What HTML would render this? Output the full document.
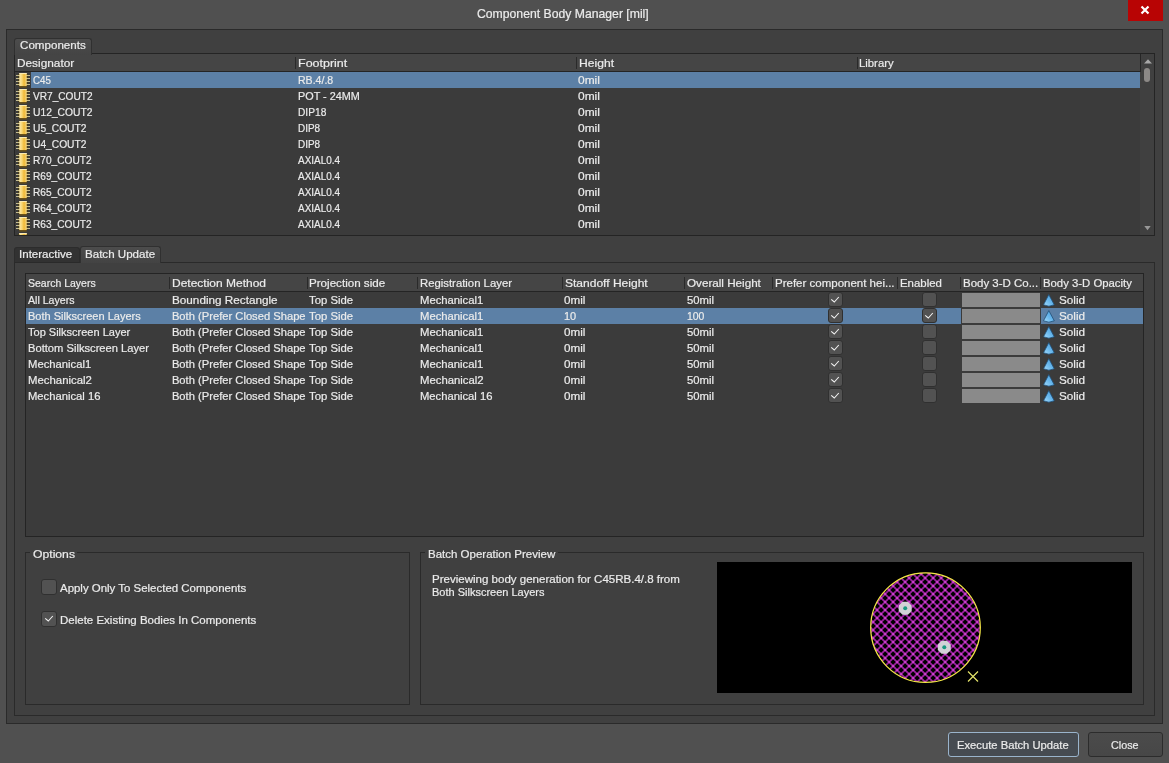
<!DOCTYPE html><html><head><meta charset="utf-8"><title>Component Body Manager</title><style>
*{box-sizing:border-box;margin:0;padding:0}
html,body{width:1169px;height:763px;overflow:hidden;background:#505050}
body{font-family:"Liberation Sans",sans-serif;font-size:11.5px;color:#ebebeb;position:relative}
.a{position:absolute}
.t{position:absolute;white-space:nowrap;line-height:16px;height:16px;transform-origin:0 0;-webkit-text-stroke:0.2px #ebebeb}
.panel{background:#404040;border:1px solid #2a2a2a}
.list{background:#3b3b3b;border:1px solid #242424}
.hdr{background:#454545;border-bottom:1px solid #242424}
.sel{background:#5c80a6}
.sep{position:absolute;width:1px;background:#2a2a2a}
.cb{position:absolute;width:15px;height:15px;background:#525252;border:1px solid #303030;border-radius:3px}
.cbL{position:absolute;width:16px;height:16px;background:#525252;border:1px solid #303030;border-radius:3px}
.sw{position:absolute;width:78px;height:14px;background:#8a8a8a}
.tab{position:absolute;border:1px solid #2a2a2a;border-bottom:none;border-radius:3px 3px 0 0}
.btn{position:absolute;background:linear-gradient(#4b4b4b,#474747);border:1px solid #2c2c2c;border-radius:3px}
</style></head><body><div id="w" style="position:absolute;left:0;top:0;width:1169px;height:763px;will-change:transform">
<svg width="0" height="0" style="position:absolute"><defs><linearGradient id="cg" x1="0" x2="1" y1="1" y2="0"><stop offset="0" stop-color="#a6dcfb"/><stop offset=".5" stop-color="#66b6ec"/><stop offset="1" stop-color="#4a98d6"/></linearGradient></defs></svg>
<div class="t" style="left:476.7px;top:6px;font-size:12.2px;transform:scaleX(1.002);">Component Body Manager [mil]</div>
<div class="a" style="left:1128px;top:0;width:35px;height:20.5px;background:#b80404"></div>
<svg class="a" style="left:1139px;top:4px" width="12" height="12" viewBox="0 0 12 12"><path d="M2.5 2.5 L9.5 9.5 M9.5 2.5 L2.5 9.5" stroke="#fff" stroke-width="2.2" fill="none"/></svg>
<div class="a panel" style="left:6px;top:29px;width:1157px;height:695px"></div>
<div class="a list" style="left:14px;top:53px;width:1141px;height:183px"></div>
<div class="a hdr" style="left:15px;top:54px;width:1125px;height:18px"></div>
<div class="tab" style="left:14px;top:38px;width:78px;height:17px;background:linear-gradient(#4c4c4c,#444444);border-color:#303030"></div>
<div class="t" style="left:19.9px;top:37px;font-size:11.2px;transform:scaleX(1.037);">Components</div>
<div class="t" style="left:17.4px;top:55px;font-size:11.2px;transform:scaleX(1.057);">Designator</div>
<div class="t" style="left:297.7px;top:55px;font-size:11.2px;transform:scaleX(1.116);">Footprint</div>
<div class="t" style="left:578.7px;top:55px;font-size:11.2px;transform:scaleX(1.082);">Height</div>
<div class="t" style="left:859.4px;top:55px;font-size:11.2px;transform:scaleX(1.012);">Library</div>
<div class="sep" style="left:295px;top:57px;height:12px"></div>
<div class="sep" style="left:576px;top:57px;height:12px"></div>
<div class="sep" style="left:857px;top:57px;height:12px"></div>
<div class="a sel" style="left:31px;top:72px;width:1109px;height:16px"></div>
<svg class="a" style="left:16px;top:72px" width="14" height="16" viewBox="0 0 14 16"><defs><linearGradient id="g" x1="0" x2="1" y1="0" y2="0"><stop offset="0" stop-color="#fbe9ac"/><stop offset=".35" stop-color="#f8d877"/><stop offset=".65" stop-color="#f0b935"/><stop offset="1" stop-color="#f6d884"/></linearGradient></defs><path d="M2 2H12V14H2Z" fill="#4a3d14"/><path d="M0 3.5H14M0 6.5H14M0 9.5H14M0 12.5H14" stroke="#c6bc8c" stroke-width="1"/><rect x="3.3" y="1" width="7.4" height="13" fill="url(#g)"/><rect x="3.3" y="1" width="7.4" height="1" fill="#fbeab0"/><rect x="3.3" y="14" width="7.4" height="1.6" fill="#6b5218"/></svg>
<div class="t" style="left:33.4px;top:72px;font-size:11.2px;transform:scaleX(0.872);">C45</div>
<div class="t" style="left:298.2px;top:72px;font-size:11.2px;transform:scaleX(0.943);">RB.4/.8</div>
<div class="t" style="left:578.2px;top:72px;font-size:11.2px;transform:scaleX(1.067);">0mil</div>
<svg class="a" style="left:16px;top:88px" width="14" height="16" viewBox="0 0 14 16"><defs><linearGradient id="g" x1="0" x2="1" y1="0" y2="0"><stop offset="0" stop-color="#fbe9ac"/><stop offset=".35" stop-color="#f8d877"/><stop offset=".65" stop-color="#f0b935"/><stop offset="1" stop-color="#f6d884"/></linearGradient></defs><path d="M2 2H12V14H2Z" fill="#4a3d14"/><path d="M0 3.5H14M0 6.5H14M0 9.5H14M0 12.5H14" stroke="#c6bc8c" stroke-width="1"/><rect x="3.3" y="1" width="7.4" height="13" fill="url(#g)"/><rect x="3.3" y="1" width="7.4" height="1" fill="#fbeab0"/><rect x="3.3" y="14" width="7.4" height="1.6" fill="#6b5218"/></svg>
<div class="t" style="left:33.4px;top:88px;font-size:11.2px;transform:scaleX(0.903);">VR7_COUT2</div>
<div class="t" style="left:298.2px;top:88px;font-size:11.2px;transform:scaleX(0.967);">POT - 24MM</div>
<div class="t" style="left:578.2px;top:88px;font-size:11.2px;transform:scaleX(1.067);">0mil</div>
<svg class="a" style="left:16px;top:104px" width="14" height="16" viewBox="0 0 14 16"><defs><linearGradient id="g" x1="0" x2="1" y1="0" y2="0"><stop offset="0" stop-color="#fbe9ac"/><stop offset=".35" stop-color="#f8d877"/><stop offset=".65" stop-color="#f0b935"/><stop offset="1" stop-color="#f6d884"/></linearGradient></defs><path d="M2 2H12V14H2Z" fill="#4a3d14"/><path d="M0 3.5H14M0 6.5H14M0 9.5H14M0 12.5H14" stroke="#c6bc8c" stroke-width="1"/><rect x="3.3" y="1" width="7.4" height="13" fill="url(#g)"/><rect x="3.3" y="1" width="7.4" height="1" fill="#fbeab0"/><rect x="3.3" y="14" width="7.4" height="1.6" fill="#6b5218"/></svg>
<div class="t" style="left:33.4px;top:104px;font-size:11.2px;transform:scaleX(0.920);">U12_COUT2</div>
<div class="t" style="left:298.2px;top:104px;font-size:11.2px;transform:scaleX(0.910);">DIP18</div>
<div class="t" style="left:578.2px;top:104px;font-size:11.2px;transform:scaleX(1.067);">0mil</div>
<svg class="a" style="left:16px;top:120px" width="14" height="16" viewBox="0 0 14 16"><defs><linearGradient id="g" x1="0" x2="1" y1="0" y2="0"><stop offset="0" stop-color="#fbe9ac"/><stop offset=".35" stop-color="#f8d877"/><stop offset=".65" stop-color="#f0b935"/><stop offset="1" stop-color="#f6d884"/></linearGradient></defs><path d="M2 2H12V14H2Z" fill="#4a3d14"/><path d="M0 3.5H14M0 6.5H14M0 9.5H14M0 12.5H14" stroke="#c6bc8c" stroke-width="1"/><rect x="3.3" y="1" width="7.4" height="13" fill="url(#g)"/><rect x="3.3" y="1" width="7.4" height="1" fill="#fbeab0"/><rect x="3.3" y="14" width="7.4" height="1.6" fill="#6b5218"/></svg>
<div class="t" style="left:33.4px;top:120px;font-size:11.2px;transform:scaleX(0.914);">U5_COUT2</div>
<div class="t" style="left:298.2px;top:120px;font-size:11.2px;transform:scaleX(0.888);">DIP8</div>
<div class="t" style="left:578.2px;top:120px;font-size:11.2px;transform:scaleX(1.067);">0mil</div>
<svg class="a" style="left:16px;top:136px" width="14" height="16" viewBox="0 0 14 16"><defs><linearGradient id="g" x1="0" x2="1" y1="0" y2="0"><stop offset="0" stop-color="#fbe9ac"/><stop offset=".35" stop-color="#f8d877"/><stop offset=".65" stop-color="#f0b935"/><stop offset="1" stop-color="#f6d884"/></linearGradient></defs><path d="M2 2H12V14H2Z" fill="#4a3d14"/><path d="M0 3.5H14M0 6.5H14M0 9.5H14M0 12.5H14" stroke="#c6bc8c" stroke-width="1"/><rect x="3.3" y="1" width="7.4" height="13" fill="url(#g)"/><rect x="3.3" y="1" width="7.4" height="1" fill="#fbeab0"/><rect x="3.3" y="14" width="7.4" height="1.6" fill="#6b5218"/></svg>
<div class="t" style="left:33.4px;top:136px;font-size:11.2px;transform:scaleX(0.914);">U4_COUT2</div>
<div class="t" style="left:298.2px;top:136px;font-size:11.2px;transform:scaleX(0.888);">DIP8</div>
<div class="t" style="left:578.2px;top:136px;font-size:11.2px;transform:scaleX(1.067);">0mil</div>
<svg class="a" style="left:16px;top:152px" width="14" height="16" viewBox="0 0 14 16"><defs><linearGradient id="g" x1="0" x2="1" y1="0" y2="0"><stop offset="0" stop-color="#fbe9ac"/><stop offset=".35" stop-color="#f8d877"/><stop offset=".65" stop-color="#f0b935"/><stop offset="1" stop-color="#f6d884"/></linearGradient></defs><path d="M2 2H12V14H2Z" fill="#4a3d14"/><path d="M0 3.5H14M0 6.5H14M0 9.5H14M0 12.5H14" stroke="#c6bc8c" stroke-width="1"/><rect x="3.3" y="1" width="7.4" height="13" fill="url(#g)"/><rect x="3.3" y="1" width="7.4" height="1" fill="#fbeab0"/><rect x="3.3" y="14" width="7.4" height="1.6" fill="#6b5218"/></svg>
<div class="t" style="left:33.4px;top:152px;font-size:11.2px;transform:scaleX(0.905);">R70_COUT2</div>
<div class="t" style="left:298.2px;top:152px;font-size:11.2px;transform:scaleX(0.890);">AXIAL0.4</div>
<div class="t" style="left:578.2px;top:152px;font-size:11.2px;transform:scaleX(1.067);">0mil</div>
<svg class="a" style="left:16px;top:168px" width="14" height="16" viewBox="0 0 14 16"><defs><linearGradient id="g" x1="0" x2="1" y1="0" y2="0"><stop offset="0" stop-color="#fbe9ac"/><stop offset=".35" stop-color="#f8d877"/><stop offset=".65" stop-color="#f0b935"/><stop offset="1" stop-color="#f6d884"/></linearGradient></defs><path d="M2 2H12V14H2Z" fill="#4a3d14"/><path d="M0 3.5H14M0 6.5H14M0 9.5H14M0 12.5H14" stroke="#c6bc8c" stroke-width="1"/><rect x="3.3" y="1" width="7.4" height="13" fill="url(#g)"/><rect x="3.3" y="1" width="7.4" height="1" fill="#fbeab0"/><rect x="3.3" y="14" width="7.4" height="1.6" fill="#6b5218"/></svg>
<div class="t" style="left:33.4px;top:168px;font-size:11.2px;transform:scaleX(0.905);">R69_COUT2</div>
<div class="t" style="left:298.2px;top:168px;font-size:11.2px;transform:scaleX(0.890);">AXIAL0.4</div>
<div class="t" style="left:578.2px;top:168px;font-size:11.2px;transform:scaleX(1.067);">0mil</div>
<svg class="a" style="left:16px;top:184px" width="14" height="16" viewBox="0 0 14 16"><defs><linearGradient id="g" x1="0" x2="1" y1="0" y2="0"><stop offset="0" stop-color="#fbe9ac"/><stop offset=".35" stop-color="#f8d877"/><stop offset=".65" stop-color="#f0b935"/><stop offset="1" stop-color="#f6d884"/></linearGradient></defs><path d="M2 2H12V14H2Z" fill="#4a3d14"/><path d="M0 3.5H14M0 6.5H14M0 9.5H14M0 12.5H14" stroke="#c6bc8c" stroke-width="1"/><rect x="3.3" y="1" width="7.4" height="13" fill="url(#g)"/><rect x="3.3" y="1" width="7.4" height="1" fill="#fbeab0"/><rect x="3.3" y="14" width="7.4" height="1.6" fill="#6b5218"/></svg>
<div class="t" style="left:33.4px;top:184px;font-size:11.2px;transform:scaleX(0.905);">R65_COUT2</div>
<div class="t" style="left:298.2px;top:184px;font-size:11.2px;transform:scaleX(0.890);">AXIAL0.4</div>
<div class="t" style="left:578.2px;top:184px;font-size:11.2px;transform:scaleX(1.067);">0mil</div>
<svg class="a" style="left:16px;top:200px" width="14" height="16" viewBox="0 0 14 16"><defs><linearGradient id="g" x1="0" x2="1" y1="0" y2="0"><stop offset="0" stop-color="#fbe9ac"/><stop offset=".35" stop-color="#f8d877"/><stop offset=".65" stop-color="#f0b935"/><stop offset="1" stop-color="#f6d884"/></linearGradient></defs><path d="M2 2H12V14H2Z" fill="#4a3d14"/><path d="M0 3.5H14M0 6.5H14M0 9.5H14M0 12.5H14" stroke="#c6bc8c" stroke-width="1"/><rect x="3.3" y="1" width="7.4" height="13" fill="url(#g)"/><rect x="3.3" y="1" width="7.4" height="1" fill="#fbeab0"/><rect x="3.3" y="14" width="7.4" height="1.6" fill="#6b5218"/></svg>
<div class="t" style="left:33.4px;top:200px;font-size:11.2px;transform:scaleX(0.905);">R64_COUT2</div>
<div class="t" style="left:298.2px;top:200px;font-size:11.2px;transform:scaleX(0.890);">AXIAL0.4</div>
<div class="t" style="left:578.2px;top:200px;font-size:11.2px;transform:scaleX(1.067);">0mil</div>
<svg class="a" style="left:16px;top:216px" width="14" height="16" viewBox="0 0 14 16"><defs><linearGradient id="g" x1="0" x2="1" y1="0" y2="0"><stop offset="0" stop-color="#fbe9ac"/><stop offset=".35" stop-color="#f8d877"/><stop offset=".65" stop-color="#f0b935"/><stop offset="1" stop-color="#f6d884"/></linearGradient></defs><path d="M2 2H12V14H2Z" fill="#4a3d14"/><path d="M0 3.5H14M0 6.5H14M0 9.5H14M0 12.5H14" stroke="#c6bc8c" stroke-width="1"/><rect x="3.3" y="1" width="7.4" height="13" fill="url(#g)"/><rect x="3.3" y="1" width="7.4" height="1" fill="#fbeab0"/><rect x="3.3" y="14" width="7.4" height="1.6" fill="#6b5218"/></svg>
<div class="t" style="left:33.4px;top:216px;font-size:11.2px;transform:scaleX(0.905);">R63_COUT2</div>
<div class="t" style="left:298.2px;top:216px;font-size:11.2px;transform:scaleX(0.890);">AXIAL0.4</div>
<div class="t" style="left:578.2px;top:216px;font-size:11.2px;transform:scaleX(1.067);">0mil</div>
<div class="a" style="left:0;top:232px;width:40px;height:3px;overflow:hidden"><svg class="a" style="left:16px;top:0px" width="14" height="16" viewBox="0 0 14 16"><defs><linearGradient id="g" x1="0" x2="1" y1="0" y2="0"><stop offset="0" stop-color="#fbe9ac"/><stop offset=".35" stop-color="#f8d877"/><stop offset=".65" stop-color="#f0b935"/><stop offset="1" stop-color="#f6d884"/></linearGradient></defs><path d="M2 2H12V14H2Z" fill="#4a3d14"/><path d="M0 3.5H14M0 6.5H14M0 9.5H14M0 12.5H14" stroke="#c6bc8c" stroke-width="1"/><rect x="3.3" y="1" width="7.4" height="13" fill="url(#g)"/><rect x="3.3" y="1" width="7.4" height="1" fill="#fbeab0"/><rect x="3.3" y="14" width="7.4" height="1.6" fill="#6b5218"/></svg></div>
<div class="a" style="left:1140px;top:54px;width:14px;height:181px;background:#404040"></div>
<div class="a" style="left:1140px;top:54px;width:1px;height:18px;background:#262626"></div>
<svg class="a" style="left:1144px;top:59px" width="8" height="5" viewBox="0 0 8 5"><path d="M0 4.5L4 0.3L8 4.5Z" fill="#a8a8a8"/></svg>
<svg class="a" style="left:1144px;top:226px" width="7" height="5" viewBox="0 0 7 5"><path d="M0.3 0L3.5 4.2L6.7 0Z" fill="#989898"/></svg>
<div class="a" style="left:1144px;top:68px;width:6px;height:14px;background:#8c8987;border-radius:3px"></div>
<div class="tab" style="left:14px;top:247px;width:66px;height:16px;background:#323232;border-color:#2c2c2c"></div>
<div class="t" style="left:19.2px;top:246px;font-size:11.2px;transform:scaleX(1.032);">Interactive</div>
<div class="a" style="left:14px;top:262px;width:1141px;height:454px;background:#404040;border:1px solid #2a2a2a"></div>
<div class="tab" style="left:80px;top:246px;width:81px;height:17px;background:linear-gradient(#4c4c4c,#434343);border-color:#303030"></div>
<div class="t" style="left:84.6px;top:246px;font-size:11.2px;transform:scaleX(1.034);">Batch Update</div>
<div class="a list" style="left:25px;top:273px;width:1119px;height:264px"></div>
<div class="a hdr" style="left:26px;top:274px;width:1117px;height:18px"></div>
<div class="t" style="left:27.8px;top:275px;font-size:11.2px;transform:scaleX(0.938);">Search Layers</div>
<div class="t" style="left:171.9px;top:275px;font-size:11.2px;transform:scaleX(1.072);">Detection Method</div>
<div class="t" style="left:309.4px;top:275px;font-size:11.2px;transform:scaleX(1.038);">Projection side</div>
<div class="t" style="left:419.9px;top:275px;font-size:11.2px;transform:scaleX(1.013);">Registration Layer</div>
<div class="t" style="left:564.7px;top:275px;font-size:11.2px;transform:scaleX(1.075);">Standoff Height</div>
<div class="t" style="left:686.8px;top:275px;font-size:11.2px;transform:scaleX(1.042);">Overall Height</div>
<div class="t" style="left:775.1px;top:275px;font-size:11.2px;transform:scaleX(1.028);">Prefer component hei...</div>
<div class="t" style="left:899.7px;top:275px;font-size:11.2px;transform:scaleX(1.020);">Enabled</div>
<div class="t" style="left:963.0px;top:275px;font-size:11.2px;transform:scaleX(1.025);">Body 3-D Co...</div>
<div class="t" style="left:1042.8px;top:275px;font-size:11.2px;transform:scaleX(1.013);">Body 3-D Opacity</div>
<div class="sep" style="left:169px;top:277px;height:12px"></div>
<div class="sep" style="left:307px;top:277px;height:12px"></div>
<div class="sep" style="left:417px;top:277px;height:12px"></div>
<div class="sep" style="left:562px;top:277px;height:12px"></div>
<div class="sep" style="left:684px;top:277px;height:12px"></div>
<div class="sep" style="left:772px;top:277px;height:12px"></div>
<div class="sep" style="left:897px;top:277px;height:12px"></div>
<div class="sep" style="left:960px;top:277px;height:12px"></div>
<div class="sep" style="left:1040px;top:277px;height:12px"></div>
<div class="t" style="left:27.8px;top:292px;font-size:11.2px;transform:scaleX(0.947);">All Layers</div>
<div class="t" style="left:171.9px;top:292px;font-size:11.2px;transform:scaleX(1.048);">Bounding Rectangle</div>
<div class="t" style="left:419.9px;top:292px;font-size:11.2px;transform:scaleX(1.008);">Mechanical1</div>
<div class="t" style="left:564.4px;top:292px;font-size:11.2px;transform:scaleX(1.043);">0mil</div>
<div class="t" style="left:686.8px;top:292px;font-size:11.2px;transform:scaleX(1.010);">50mil</div>
<div class="t" style="left:309.4px;top:292px;font-size:11.2px;transform:scaleX(1.013);">Top Side</div>
<div class="cb" style="left:828px;top:292px"></div>
<svg class="a" style="left:830px;top:296px" width="10" height="8" viewBox="0 0 10 8"><path d="M1.2 3.3L4.3 6L8.8 1" stroke="#f2f2f2" stroke-width="1.1" fill="none"/></svg>
<div class="cb" style="left:922px;top:292px"></div>
<div class="sw" style="left:962px;top:293px"></div>
<svg class="a" style="left:1043px;top:294px" width="12" height="13" viewBox="0 0 12 13"><path d="M5.8 0.6L11.3 10.8Q5.8 13.6 0.5 10.8Z" fill="url(#cg)" stroke="#1f4d74" stroke-width="0.8" stroke-linejoin="round"/></svg>
<div class="t" style="left:1058.9px;top:292px;font-size:11.2px;transform:scaleX(1.049);">Solid</div>
<div class="a sel" style="left:26px;top:308px;width:1117px;height:16px"></div>
<div class="t" style="left:27.8px;top:308px;font-size:11.2px;transform:scaleX(0.986);">Both Silkscreen Layers</div>
<div class="t" style="left:171.9px;top:308px;font-size:11.2px;transform:scaleX(1.000);">Both (Prefer Closed Shape</div>
<div class="t" style="left:419.9px;top:308px;font-size:11.2px;transform:scaleX(1.008);">Mechanical1</div>
<div class="t" style="left:564.4px;top:308px;font-size:11.2px;transform:scaleX(0.980);">10</div>
<div class="t" style="left:686.8px;top:308px;font-size:11.2px;transform:scaleX(0.932);">100</div>
<div class="t" style="left:309.4px;top:308px;font-size:11.2px;transform:scaleX(1.013);">Top Side</div>
<div class="a" style="left:961px;top:308px;width:80px;height:16px;background:#3b3b3b"></div>
<div class="cb" style="left:828px;top:308px"></div>
<svg class="a" style="left:830px;top:312px" width="10" height="8" viewBox="0 0 10 8"><path d="M1.2 3.3L4.3 6L8.8 1" stroke="#f2f2f2" stroke-width="1.1" fill="none"/></svg>
<div class="cb" style="left:922px;top:308px"></div>
<svg class="a" style="left:924px;top:312px" width="10" height="8" viewBox="0 0 10 8"><path d="M1.2 3.3L4.3 6L8.8 1" stroke="#f2f2f2" stroke-width="1.1" fill="none"/></svg>
<div class="sw" style="left:962px;top:309px"></div>
<svg class="a" style="left:1043px;top:310px" width="12" height="13" viewBox="0 0 12 13"><path d="M5.8 0.6L11.3 10.8Q5.8 13.6 0.5 10.8Z" fill="url(#cg)" stroke="#1f4d74" stroke-width="0.8" stroke-linejoin="round"/></svg>
<div class="t" style="left:1058.9px;top:308px;font-size:11.2px;transform:scaleX(1.049);">Solid</div>
<div class="t" style="left:27.8px;top:324px;font-size:11.2px;transform:scaleX(0.984);">Top Silkscreen Layer</div>
<div class="t" style="left:171.9px;top:324px;font-size:11.2px;transform:scaleX(1.000);">Both (Prefer Closed Shape</div>
<div class="t" style="left:419.9px;top:324px;font-size:11.2px;transform:scaleX(1.008);">Mechanical1</div>
<div class="t" style="left:564.4px;top:324px;font-size:11.2px;transform:scaleX(1.043);">0mil</div>
<div class="t" style="left:686.8px;top:324px;font-size:11.2px;transform:scaleX(1.010);">50mil</div>
<div class="t" style="left:309.4px;top:324px;font-size:11.2px;transform:scaleX(1.013);">Top Side</div>
<div class="cb" style="left:828px;top:324px"></div>
<svg class="a" style="left:830px;top:328px" width="10" height="8" viewBox="0 0 10 8"><path d="M1.2 3.3L4.3 6L8.8 1" stroke="#f2f2f2" stroke-width="1.1" fill="none"/></svg>
<div class="cb" style="left:922px;top:324px"></div>
<div class="sw" style="left:962px;top:325px"></div>
<svg class="a" style="left:1043px;top:326px" width="12" height="13" viewBox="0 0 12 13"><path d="M5.8 0.6L11.3 10.8Q5.8 13.6 0.5 10.8Z" fill="url(#cg)" stroke="#1f4d74" stroke-width="0.8" stroke-linejoin="round"/></svg>
<div class="t" style="left:1058.9px;top:324px;font-size:11.2px;transform:scaleX(1.049);">Solid</div>
<div class="t" style="left:27.8px;top:340px;font-size:11.2px;transform:scaleX(0.998);">Bottom Silkscreen Layer</div>
<div class="t" style="left:171.9px;top:340px;font-size:11.2px;transform:scaleX(1.000);">Both (Prefer Closed Shape</div>
<div class="t" style="left:419.9px;top:340px;font-size:11.2px;transform:scaleX(1.008);">Mechanical1</div>
<div class="t" style="left:564.4px;top:340px;font-size:11.2px;transform:scaleX(1.043);">0mil</div>
<div class="t" style="left:686.8px;top:340px;font-size:11.2px;transform:scaleX(1.010);">50mil</div>
<div class="t" style="left:309.4px;top:340px;font-size:11.2px;transform:scaleX(1.013);">Top Side</div>
<div class="cb" style="left:828px;top:340px"></div>
<svg class="a" style="left:830px;top:344px" width="10" height="8" viewBox="0 0 10 8"><path d="M1.2 3.3L4.3 6L8.8 1" stroke="#f2f2f2" stroke-width="1.1" fill="none"/></svg>
<div class="cb" style="left:922px;top:340px"></div>
<div class="sw" style="left:962px;top:341px"></div>
<svg class="a" style="left:1043px;top:342px" width="12" height="13" viewBox="0 0 12 13"><path d="M5.8 0.6L11.3 10.8Q5.8 13.6 0.5 10.8Z" fill="url(#cg)" stroke="#1f4d74" stroke-width="0.8" stroke-linejoin="round"/></svg>
<div class="t" style="left:1058.9px;top:340px;font-size:11.2px;transform:scaleX(1.049);">Solid</div>
<div class="t" style="left:27.8px;top:356px;font-size:11.2px;transform:scaleX(1.006);">Mechanical1</div>
<div class="t" style="left:171.9px;top:356px;font-size:11.2px;transform:scaleX(1.000);">Both (Prefer Closed Shape</div>
<div class="t" style="left:419.9px;top:356px;font-size:11.2px;transform:scaleX(1.008);">Mechanical1</div>
<div class="t" style="left:564.4px;top:356px;font-size:11.2px;transform:scaleX(1.043);">0mil</div>
<div class="t" style="left:686.8px;top:356px;font-size:11.2px;transform:scaleX(1.010);">50mil</div>
<div class="t" style="left:309.4px;top:356px;font-size:11.2px;transform:scaleX(1.013);">Top Side</div>
<div class="cb" style="left:828px;top:356px"></div>
<svg class="a" style="left:830px;top:360px" width="10" height="8" viewBox="0 0 10 8"><path d="M1.2 3.3L4.3 6L8.8 1" stroke="#f2f2f2" stroke-width="1.1" fill="none"/></svg>
<div class="cb" style="left:922px;top:356px"></div>
<div class="sw" style="left:962px;top:357px"></div>
<svg class="a" style="left:1043px;top:358px" width="12" height="13" viewBox="0 0 12 13"><path d="M5.8 0.6L11.3 10.8Q5.8 13.6 0.5 10.8Z" fill="url(#cg)" stroke="#1f4d74" stroke-width="0.8" stroke-linejoin="round"/></svg>
<div class="t" style="left:1058.9px;top:356px;font-size:11.2px;transform:scaleX(1.049);">Solid</div>
<div class="t" style="left:27.8px;top:372px;font-size:11.2px;transform:scaleX(1.017);">Mechanical2</div>
<div class="t" style="left:171.9px;top:372px;font-size:11.2px;transform:scaleX(1.000);">Both (Prefer Closed Shape</div>
<div class="t" style="left:419.9px;top:372px;font-size:11.2px;transform:scaleX(1.013);">Mechanical2</div>
<div class="t" style="left:564.4px;top:372px;font-size:11.2px;transform:scaleX(1.043);">0mil</div>
<div class="t" style="left:686.8px;top:372px;font-size:11.2px;transform:scaleX(1.010);">50mil</div>
<div class="t" style="left:309.4px;top:372px;font-size:11.2px;transform:scaleX(1.013);">Top Side</div>
<div class="cb" style="left:828px;top:372px"></div>
<svg class="a" style="left:830px;top:376px" width="10" height="8" viewBox="0 0 10 8"><path d="M1.2 3.3L4.3 6L8.8 1" stroke="#f2f2f2" stroke-width="1.1" fill="none"/></svg>
<div class="cb" style="left:922px;top:372px"></div>
<div class="sw" style="left:962px;top:373px"></div>
<svg class="a" style="left:1043px;top:374px" width="12" height="13" viewBox="0 0 12 13"><path d="M5.8 0.6L11.3 10.8Q5.8 13.6 0.5 10.8Z" fill="url(#cg)" stroke="#1f4d74" stroke-width="0.8" stroke-linejoin="round"/></svg>
<div class="t" style="left:1058.9px;top:372px;font-size:11.2px;transform:scaleX(1.049);">Solid</div>
<div class="t" style="left:27.8px;top:388px;font-size:11.2px;transform:scaleX(1.005);">Mechanical 16</div>
<div class="t" style="left:171.9px;top:388px;font-size:11.2px;transform:scaleX(1.000);">Both (Prefer Closed Shape</div>
<div class="t" style="left:419.9px;top:388px;font-size:11.2px;transform:scaleX(1.005);">Mechanical 16</div>
<div class="t" style="left:564.4px;top:388px;font-size:11.2px;transform:scaleX(1.043);">0mil</div>
<div class="t" style="left:686.8px;top:388px;font-size:11.2px;transform:scaleX(1.010);">50mil</div>
<div class="t" style="left:309.4px;top:388px;font-size:11.2px;transform:scaleX(1.013);">Top Side</div>
<div class="cb" style="left:828px;top:388px"></div>
<svg class="a" style="left:830px;top:392px" width="10" height="8" viewBox="0 0 10 8"><path d="M1.2 3.3L4.3 6L8.8 1" stroke="#f2f2f2" stroke-width="1.1" fill="none"/></svg>
<div class="cb" style="left:922px;top:388px"></div>
<div class="sw" style="left:962px;top:389px"></div>
<svg class="a" style="left:1043px;top:390px" width="12" height="13" viewBox="0 0 12 13"><path d="M5.8 0.6L11.3 10.8Q5.8 13.6 0.5 10.8Z" fill="url(#cg)" stroke="#1f4d74" stroke-width="0.8" stroke-linejoin="round"/></svg>
<div class="t" style="left:1058.9px;top:388px;font-size:11.2px;transform:scaleX(1.049);">Solid</div>
<div class="a" style="left:25px;top:552px;width:385px;height:153px;border:1px solid #2a2a2a"></div>
<div class="a" style="left:30px;top:551px;width:47px;height:3px;background:#404040"></div>
<div class="t" style="left:32.5px;top:546px;font-size:11.2px;transform:scaleX(1.089);">Options</div>
<div class="cbL" style="left:41px;top:579px"></div>
<div class="t" style="left:59.6px;top:580px;font-size:11.2px;transform:scaleX(1.023);">Apply Only To Selected Components</div>
<div class="cbL" style="left:41px;top:611px"></div>
<svg class="a" style="left:44px;top:615px" width="10" height="8" viewBox="0 0 10 8"><path d="M1.2 3.3L4.3 6L8.8 1" stroke="#f2f2f2" stroke-width="1.1" fill="none"/></svg>
<div class="t" style="left:59.6px;top:612px;font-size:11.2px;transform:scaleX(1.028);">Delete Existing Bodies In Components</div>
<div class="a" style="left:420px;top:552px;width:724px;height:153px;border:1px solid #2a2a2a"></div>
<div class="a" style="left:425px;top:551px;width:133px;height:3px;background:#404040"></div>
<div class="t" style="left:427.8px;top:546px;font-size:11.2px;transform:scaleX(1.028);">Batch Operation Preview</div>
<div class="t" style="left:431.9px;top:571px;font-size:11.2px;transform:scaleX(1.030);">Previewing body generation for C45RB.4/.8 from</div>
<div class="t" style="left:431.9px;top:584px;font-size:11.2px;transform:scaleX(0.983);">Both Silkscreen Layers</div>
<svg class="a" style="left:717px;top:562px" width="415" height="131" viewBox="0 0 415 131"><defs><pattern id="h" width="5.66" height="5.66" patternUnits="userSpaceOnUse" patternTransform="rotate(45)"><rect width="5.66" height="5.66" fill="#000"/><path d="M0 0H5.66M0 0V5.66M0 5.66H5.66M5.66 0V5.66" stroke="#6e1674" stroke-width="1.7"/><path d="M0 0H5.66M0 0V5.66M0 5.66H5.66M5.66 0V5.66" stroke="#cc2ecc" stroke-width="0.9"/><path d="M-.8 -.8H.8V.8H-.8ZM4.86 -.8H6.46V.8H4.86ZM-.8 4.86H.8V6.46H-.8ZM4.86 4.86H6.46V6.46H4.86Z" fill="#ee5cee"/></pattern></defs><rect width="415" height="131" fill="#000"/><circle cx="208.5" cy="65.6" r="54.8" fill="url(#h)" stroke="#f2e644" stroke-width="1.25"/><polygon points="194.7,48.9 190.9,52.7 185.5,52.7 181.7,48.9 181.7,43.5 185.5,39.7 190.9,39.7 194.7,43.5" fill="#d2d2d6"/><circle cx="188.2" cy="46.2" r="2" fill="#189880"/><polygon points="233.8,88.0 230.0,91.8 224.6,91.8 220.8,88.0 220.8,82.6 224.6,78.8 230.0,78.8 233.8,82.6" fill="#d2d2d6"/><circle cx="227.3" cy="85.3" r="2" fill="#189880"/><path d="M251 109.5L261 119.5M261 109.5L251 119.5" stroke="#e6e66a" stroke-width="1.15"/></svg>
<div class="btn" style="left:948px;top:732px;width:131px;height:25px;border-color:#9ab4cc;background:#464b51"></div>
<div class="t" style="left:957.0px;top:737px;font-size:11.2px;transform:scaleX(1.003);">Execute Batch Update</div>
<div class="btn" style="left:1088px;top:732px;width:75px;height:25px"></div>
<div class="t" style="left:1111.2px;top:737px;font-size:11.2px;transform:scaleX(0.965);">Close</div>
</div></body></html>
